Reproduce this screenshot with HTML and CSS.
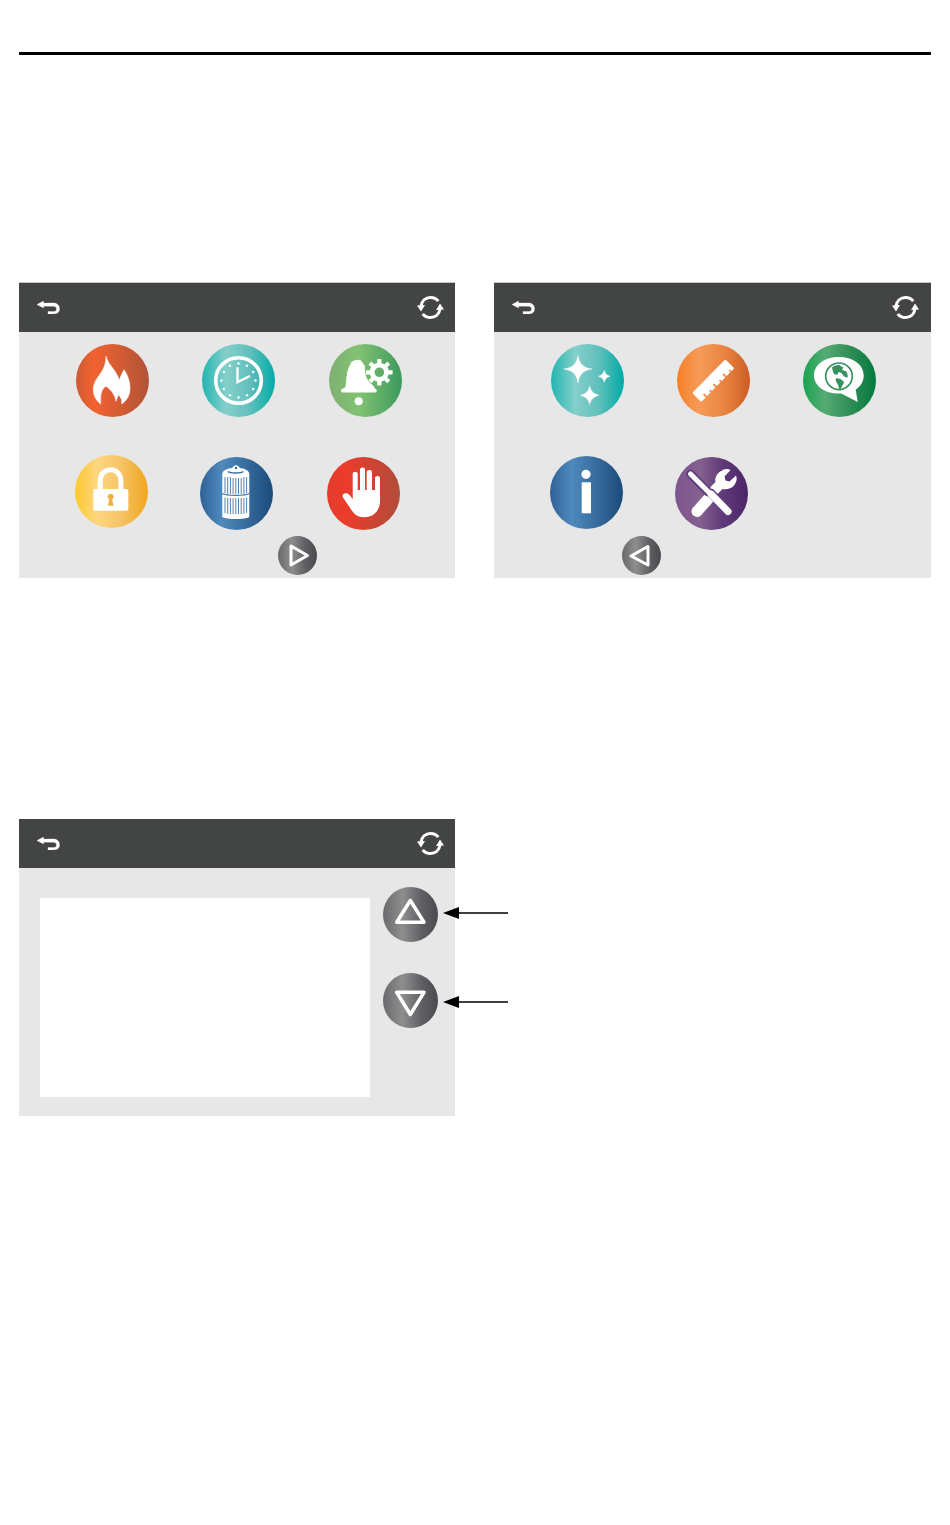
FILE: index.html
```html
<!DOCTYPE html>
<html lang="en">
<head>
<meta charset="utf-8">
<title>Control panel screens</title>
<link rel="stylesheet" href="styles.css">
</head>
<body>
<svg width="0" height="0" class="defs">
  <defs>
    <linearGradient id="g-red"><stop offset="0" stop-color="#cf5a34"/><stop offset=".25" stop-color="#f26230"/><stop offset="1" stop-color="#b05437"/></linearGradient>
    <linearGradient id="g-teal"><stop offset="0" stop-color="#22b5b0"/><stop offset=".33" stop-color="#85cfcb"/><stop offset=".65" stop-color="#62c0bc"/><stop offset="1" stop-color="#00aaa6"/></linearGradient>
    <linearGradient id="g-lime"><stop offset="0" stop-color="#7fb073"/><stop offset=".4" stop-color="#83c272"/><stop offset="1" stop-color="#3b9a5c"/></linearGradient>
    <linearGradient id="g-gold"><stop offset="0" stop-color="#fcc92c"/><stop offset=".3" stop-color="#fdd680"/><stop offset=".6" stop-color="#f7c66a"/><stop offset="1" stop-color="#efa51f"/></linearGradient>
    <linearGradient id="g-blue"><stop offset="0" stop-color="#2f6297"/><stop offset=".3" stop-color="#4f8abd"/><stop offset=".65" stop-color="#356a9c"/><stop offset="1" stop-color="#1a4a7a"/></linearGradient>
    <linearGradient id="g-stop"><stop offset="0" stop-color="#e33c2c"/><stop offset=".25" stop-color="#ec3c2a"/><stop offset="1" stop-color="#b04c3c"/></linearGradient>
    <linearGradient id="g-orange"><stop offset="0" stop-color="#f58026"/><stop offset=".3" stop-color="#f69a58"/><stop offset=".65" stop-color="#e98440"/><stop offset="1" stop-color="#cc5c24"/></linearGradient>
    <linearGradient id="g-green"><stop offset="0" stop-color="#18a551"/><stop offset=".3" stop-color="#56ab74"/><stop offset=".65" stop-color="#2f8d56"/><stop offset="1" stop-color="#037a3e"/></linearGradient>
    <linearGradient id="g-purple"><stop offset="0" stop-color="#7d5590"/><stop offset=".35" stop-color="#84608f"/><stop offset=".65" stop-color="#5f3a78"/><stop offset="1" stop-color="#4c2569"/></linearGradient>
    <linearGradient id="g-grey"><stop offset="0" stop-color="#6a6a6d"/><stop offset=".35" stop-color="#8e8e8f"/><stop offset=".7" stop-color="#606064"/><stop offset="1" stop-color="#4a4a4f"/></linearGradient>
    <symbol id="back" viewBox="0 0 23 13">
      <path d="M6.500 0 0 3.500 6.500 7V5.200H16c2.500 0 3.500 1 3.500 2.800s-1 2.600-3.500 2.600h-5V13h5.500c4 0 6-2 6-5.200S20.500 2 16.500 2h-10z" fill="#fff" stroke="#fff" stroke-width=".3"/>
    </symbol>
    <symbol id="sync" viewBox="0 0 27 23">
      <path d="M4 10C4.800 5 8.500 1.500 13.500 1.500c3.200 0 6 1.300 7.800 3.700M23 13c-.8 5-4.500 8.500-9.500 8.500-3.200 0-6-1.300-7.800-3.700" fill="none" stroke="#fff" stroke-width="3"/>
      <path d="M0 9.500 8 9 4 15.500zM27 13.500 19 14 23 7.500z" fill="#fff"/>
    </symbol>
  </defs>
</svg>

<hr class="rule">

<section class="screens">
  <div class="panel panel-narrow">
    <header class="bar bar-edged">
      <svg class="back"><use href="#back"/></svg>
      <svg class="sync"><use href="#sync"/></svg>
    </header>
    <div class="body">
      <div class="row row-a1">
        <svg class="ico" viewBox="0 0 73 73"><circle cx="36.500" cy="36.500" r="36.500" fill="url(#g-red)"/>
          <path d="M30 12.300c1 4.500 4.500 9 7.300 12.700 2.800 3.700 5 7.500 6 11.700 1-4 2.700-7.500 4.700-11 3.500 5 6 11.500 6 18.300 0 7-3 12.500-8.300 16 .5-3-.2-6.500-3.400-9.300L40 57.300c-.7-5.500-4.500-11.500-10-15-3.500 2-6 5.500-5.300 17.700C20 56.500 17.300 51 17.300 45.700c0-6 3.200-11 7-16 3.200-4.200 5.700-9.700 5.700-17.400z" fill="#fff" stroke="#fff" stroke-width=".6"/></svg>
        <svg class="ico" viewBox="0 0 73 73"><circle cx="36.500" cy="36.500" r="36.500" fill="url(#g-teal)"/>
          <circle cx="36.500" cy="36.500" r="22.800" fill="none" stroke="#fff" stroke-width="3.600"/>
          <g fill="#fff"><circle cx="36.500" cy="19.500" r="1.200"/><circle cx="45" cy="21.800" r="1.200"/><circle cx="51.200" cy="28" r="1.200"/><circle cx="53.500" cy="36.500" r="1.200"/><circle cx="51.200" cy="45" r="1.200"/><circle cx="45" cy="51.200" r="1.200"/><circle cx="36.500" cy="53.500" r="1.200"/><circle cx="28" cy="51.200" r="1.200"/><circle cx="21.800" cy="45" r="1.200"/><circle cx="19.500" cy="36.500" r="1.200"/><circle cx="21.800" cy="28" r="1.200"/><circle cx="28" cy="21.800" r="1.200"/></g>
          <path d="M35.500 23.300V38L48 32" fill="none" stroke="#fff" stroke-width="2.400"/></svg>
        <svg class="ico" viewBox="0 0 73 73"><circle cx="36.500" cy="36.500" r="36.500" fill="url(#g-lime)"/>
          <path d="M29.300 15.700c2.200 0 3.500 1.200 4 2.800l2.700 3.500c-.5 4 .2 8 1.700 12 1.500 3.200 3.800 5.500 6.500 7.500l2 3.200c1 .2 1.500 1 1.500 1.800 0 1-.5 2-1.500 2H13.500c-1 0-1.500-1-1.500-2 0-.8.500-1.600 1.500-1.800l2-.8c1-1 1.300-2.500 1.500-4 .4-7 1-14 4-19 1-3 3-5 8.300-5.200z" fill="#fff"/>
          <circle cx="29.700" cy="57.300" r="4" fill="#fff"/>
          <circle cx="50.300" cy="28.300" r="7.200" fill="none" stroke="#fff" stroke-width="4.800"/>
          <path d="M50.300 15v5M50.300 36.600v5M37 28.300h5M58.600 28.300h5M40.900 18.900l3.500 3.500M56.200 34.200l3.500 3.500M40.900 37.700l3.500-3.500M56.200 22.400l3.500-3.500" stroke="#fff" stroke-width="4.200" fill="none"/></svg>
      </div>
      <div class="row row-a2">
        <svg class="ico" viewBox="0 0 73 73"><circle cx="36.500" cy="36.500" r="36.500" fill="url(#g-gold)"/>
          <path d="M25.200 35V25a10.300 10.300 0 0 1 20.600 0v10" fill="none" stroke="#fff" stroke-width="5"/>
          <path d="M18.300 35.500c0-.8.700-1.500 1.500-1.500h32c.8 0 1.500.7 1.500 1.500v18.700c0 .8-.7 1.500-1.500 1.500h-32c-.8 0-1.500-.7-1.500-1.500z" fill="#fff"/>
          <path d="M35.700 38.700a3 3 0 0 1 1.500 5.600l1.300 6.400h-5.600l1.300-6.400a3 3 0 0 1 1.500-5.600z" fill="#efb040"/></svg>
        <svg class="ico ico-down" viewBox="0 0 73 73"><circle cx="36.500" cy="36.500" r="36.500" fill="url(#g-blue)"/>
          <path d="M22.300 17c0-3.500 6-5.800 9.700-6 1-1.500 2.800-2.700 4-2.700s3 1.200 4 2.700c3.700.2 9.300 2.500 9.300 6v43c-4 2.700-23 2.700-27 0z" fill="#fff"/>
          <path d="M28 14.500c2 2 13 2 15.300 0" fill="none" stroke="#356a9c" stroke-width="1.300"/>
          <circle cx="36" cy="11" r="1.200" fill="#356a9c"/>
          <path d="M25 20v16M27.700 20v17M30.400 20v17M33.100 21v16M35.800 21v16M38.500 21v16M41.200 21v16M43.900 20v17M46.600 20v16M25 40.500v15.500M27.700 41v16M30.400 41v16M33.100 41v16M35.800 41v16M38.500 41v16M41.200 41v16M43.900 41v16M46.600 40.500v15.500" fill="none" stroke="#3f75a8" stroke-width=".9"/>
          <path d="M22.300 36.500c4 2.500 23 2.500 27 0" fill="none" stroke="#3f75a8" stroke-width="1.300"/></svg>
        <svg class="ico ico-down" viewBox="0 0 73 73"><circle cx="36.500" cy="36.500" r="36.500" fill="url(#g-stop)"/>
          <path d="M25.700 36V17c0-3 5-3 5 0v16H33V13c0-3.200 5-3.200 5 0v20h1.700V15.500c0-3.200 5.300-3.200 5.300 0V33h3V21.500c0-3.200 5-3.200 5 0V44c0 9-6 16.300-15.500 16.300-7 0-10.500-3-13.500-8L16 40.500c-1.200-2 0-3.500 1.500-4s3-.5 4.500 1l3.700 4.500z" fill="#fff"/></svg>
      </div>
      <button class="nav nav-next" type="button" aria-label="Next">
        <svg class="nav-ico" viewBox="0 0 39 39"><circle cx="19.500" cy="19.500" r="19.500" fill="url(#g-grey)"/>
          <path d="M13 10 29.500 19.500 13 29z" fill="none" stroke="#fff" stroke-width="3" stroke-linejoin="round"/></svg>
      </button>
    </div>
  </div>

  <div class="panel">
    <header class="bar bar-edged">
      <svg class="back"><use href="#back"/></svg>
      <svg class="sync"><use href="#sync"/></svg>
    </header>
    <div class="body">
      <div class="row row-b1">
        <svg class="ico" viewBox="0 0 73 73"><circle cx="36.500" cy="36.500" r="36.500" fill="url(#g-teal)"/>
          <path d="M27 11.700c1.500 8.500 5 12 14 13.300-9 1.300-12.500 5-14 14-1.500-9-5-12.700-14.300-14 9.300-1.300 12.800-4.800 14.300-13.300z" fill="#fff" stroke="#fff" stroke-width=".5"/>
          <path d="M53.300 26.300c.7 3 2 4.700 5.700 6-3.700 1.200-5 2.800-5.700 6-.8-3.200-2-4.800-5.800-6 3.800-1.300 5-3 5.800-6z" fill="#fff" stroke="#fff" stroke-width=".5"/>
          <path d="M38.700 42.300c1 4.500 3.500 7.500 9 9-5.500 1.500-8 4.500-9 9-1-4.500-3.500-7.500-9-9 5.500-1.500 8-4.500 9-9z" fill="#fff" stroke="#fff" stroke-width=".5"/></svg>
        <svg class="ico" viewBox="0 0 73 73"><circle cx="36.500" cy="36.500" r="36.500" fill="url(#g-orange)"/>
          <path d="M16.700 49 48.300 16.700l7.500 7.500L24.200 56.500z" fill="#fff" stroke="#fff" stroke-width="2" stroke-linejoin="round"/>
          <path d="M29.800 53.200l-3.200-3.200M34.700 48.200l-2-2M39.600 43.200l-3.200-3.200M44.500 38.200l-2-2M49.400 33.200l-3.200-3.200M54.200 28.200l-2-2" stroke="#ee8d4c" stroke-width="1.900" fill="none"/></svg>
        <svg class="ico" viewBox="0 0 73 73"><circle cx="36.500" cy="36.500" r="36.500" fill="url(#g-green)"/>
          <path d="M35.800 13c14 0 24.900 7.500 24.900 18.500 0 7-4 11.500-8 14.200l2 12.300L38.300 49.500h-2.500C21.800 49.500 11 42 11 31.500 11 20.500 21.800 13 35.800 13z" fill="#fff"/>
          <circle cx="36" cy="32.300" r="13.300" fill="none" stroke="#3a9160" stroke-width="1.700"/>
          <path d="M29 23.500c3-2.300 5-2.800 8-2.300.5 1 3 2 3.500 2.500l-1.500 2c1 1 2.500.5 4 1.500 1.500 2 2 4 1.500 6.500L41 32.500l-2.500-3.500-3-1-1 2.500c-2 .5-3.500 0-4.500-2.500zM33 34.500c2.500-.5 5 .5 7 2.500 1.500 1 1 2.500-.5 4L38 44.500l-2 .5c-.5-3-1-5-2.500-6.500-.7-1.200-1-2.800-.5-4z" fill="#3a9160"/></svg>
      </div>
      <div class="row row-b2">
        <svg class="ico" viewBox="0 0 73 73"><circle cx="36.500" cy="36.500" r="36.500" fill="url(#g-blue)"/>
          <circle cx="36" cy="18.300" r="4.600" fill="#fff"/>
          <rect x="31.700" y="26.300" width="9.300" height="31" fill="#fff"/></svg>
        <svg class="ico ico-down" viewBox="0 0 73 73"><circle cx="36.500" cy="36.500" r="36.500" fill="url(#g-purple)"/>
          <path d="M37 34 47.500 24" stroke="#fff" stroke-width="7" fill="none"/>
          <path d="M47.500 13c3-1.500 6-1.500 8 0l-6 6.500 1 4 4 1 6.500-6c1.500 3 .5 7-2 10-3 3.300-7.500 4.500-11.500 3.500l-5 5-7-7 5-5c-1-4 1-9 7.500-12z" fill="#fff"/>
          <path d="M22 54.500 34 41" stroke="#fff" stroke-width="11" stroke-linecap="round" fill="none"/>
          <path d="M15.500 17 33 35l3 1 17 18.500" stroke="#5f3a78" stroke-width="8.500" fill="none" stroke-linecap="round"/>
          <path d="M15.500 17 33.500 35" stroke="#fff" stroke-width="5" stroke-linecap="round" fill="none"/>
          <path d="M36 37 53 54.500" stroke="#fff" stroke-width="7" stroke-linecap="round" fill="none"/></svg>
      </div>
      <button class="nav nav-prev" type="button" aria-label="Previous">
        <svg class="nav-ico" viewBox="0 0 39 39"><circle cx="19.500" cy="19.500" r="19.500" fill="url(#g-grey)"/>
          <path d="M26 10.500 9 20 26 29z" fill="none" stroke="#fff" stroke-width="3" stroke-linejoin="round"/></svg>
      </button>
    </div>
  </div>
</section>

<section class="list-screen">
  <div class="panel panel-narrow panel-list">
    <header class="bar">
      <svg class="back"><use href="#back"/></svg>
      <svg class="sync"><use href="#sync"/></svg>
    </header>
    <div class="body body-list">
      <div class="list-box"></div>
      <div class="scroll">
        <div class="scroll-item">
          <svg class="scroll-ico" viewBox="0 0 55 55"><circle cx="27.500" cy="27.500" r="27.500" fill="url(#g-grey)"/>
            <path d="M27.300 13.500 41 35.300H13.700z" fill="none" stroke="#fff" stroke-width="3.500" stroke-linejoin="round"/></svg>
          <svg class="callout" viewBox="0 0 65 14"><path d="M0 7 16 1V6.300H65V7.700H16V13z" fill="#000"/></svg>
        </div>
        <div class="scroll-item">
          <svg class="scroll-ico" viewBox="0 0 55 55"><circle cx="27.500" cy="27.500" r="27.500" fill="url(#g-grey)"/>
            <path d="M27.300 41.500 41 19.300H13.700z" fill="none" stroke="#fff" stroke-width="3.500" stroke-linejoin="round"/></svg>
          <svg class="callout callout-low" viewBox="0 0 65 14"><path d="M0 7 16 1V6.300H65V7.700H16V13z" fill="#000"/></svg>
        </div>
      </div>
    </div>
  </div>
</section>
</body>
</html>
```
FILE: styles.css
```css
html, body {
  margin: 0;
  padding: 0;
  background: #fff;
}

body {
  width: 950px;
  height: 1525px;
  overflow: hidden;
  font-family: "Liberation Sans", sans-serif;
}

.defs {
  position: absolute;
}

.rule {
  width: 912px;
  height: 3px;
  margin: 52px 0 0 19px;
  border: 0;
  background: #000;
}

.screens {
  display: flex;
  margin: 228px 0 0 19px;
}

.panel {
  width: 437px;
  height: 295px;
  display: flex;
  flex-direction: column;
  background: #e7e7e7;
}

.panel-narrow {
  width: 436px;
}

.screens .panel-narrow {
  margin-right: 39px;
}

.bar {
  flex: 0 0 49px;
  display: flex;
  align-items: center;
  justify-content: space-between;
  padding: 0 12px 0 18px;
  background: #434544;
}

.bar-edged {
  box-shadow: 0 -1px 0 #c4c4c4;
}

.panel-narrow .bar {
  padding-right: 11px;
}

.back {
  width: 23px;
  height: 13px;
  margin-top: -1px;
}

.sync {
  width: 27px;
  height: 23px;
  margin-top: -1px;
}

.body {
  flex: 1;
  min-height: 0;
}

.row {
  display: flex;
  align-items: flex-start;
}

.ico {
  flex: none;
  width: 73px;
  height: 73px;
}

.ico-down {
  margin-top: 1px;
}

.row-a1 {
  gap: 53px;
  padding: 12px 0 0 57px;
}

.row-a1 .ico:last-child {
  margin-left: 1px;
}

.row-a2 {
  gap: 52px;
  padding: 38px 0 0 56px;
}

.row-a2 .ico:last-child {
  margin-left: 2px;
}

.row-a2 .ico-down {
  margin-top: 2px;
}

.row-b1 {
  gap: 53px;
  padding: 12px 0 0 57px;
}

.row-b2 {
  gap: 52px;
  padding: 39px 0 0 56px;
}

.nav {
  display: block;
  width: 39px;
  height: 39px;
  margin-top: 6px;
  padding: 0;
  border: 0;
  background: none;
}

.nav-next {
  margin-left: 259px;
}

.nav-prev {
  margin-left: 128px;
}

.nav-ico {
  display: block;
  width: 39px;
  height: 39px;
}

.list-screen {
  margin: 241px 0 0 19px;
}

.panel-list {
  height: 297px;
}

.body-list {
  display: flex;
  align-items: flex-start;
  padding: 19px 0 0 21px;
}

.list-box {
  width: 330px;
  height: 199px;
  margin-top: 11px;
  background: #fff;
}

.scroll {
  display: flex;
  flex-direction: column;
  gap: 31px;
  margin-left: 13px;
}

.scroll-item {
  position: relative;
  width: 55px;
  height: 55px;
}

.scroll-ico {
  display: block;
  width: 55px;
  height: 55px;
}

.callout {
  position: absolute;
  left: 60px;
  top: 19px;
  width: 65px;
  height: 14px;
}

.callout-low {
  top: 22px;
}
```
